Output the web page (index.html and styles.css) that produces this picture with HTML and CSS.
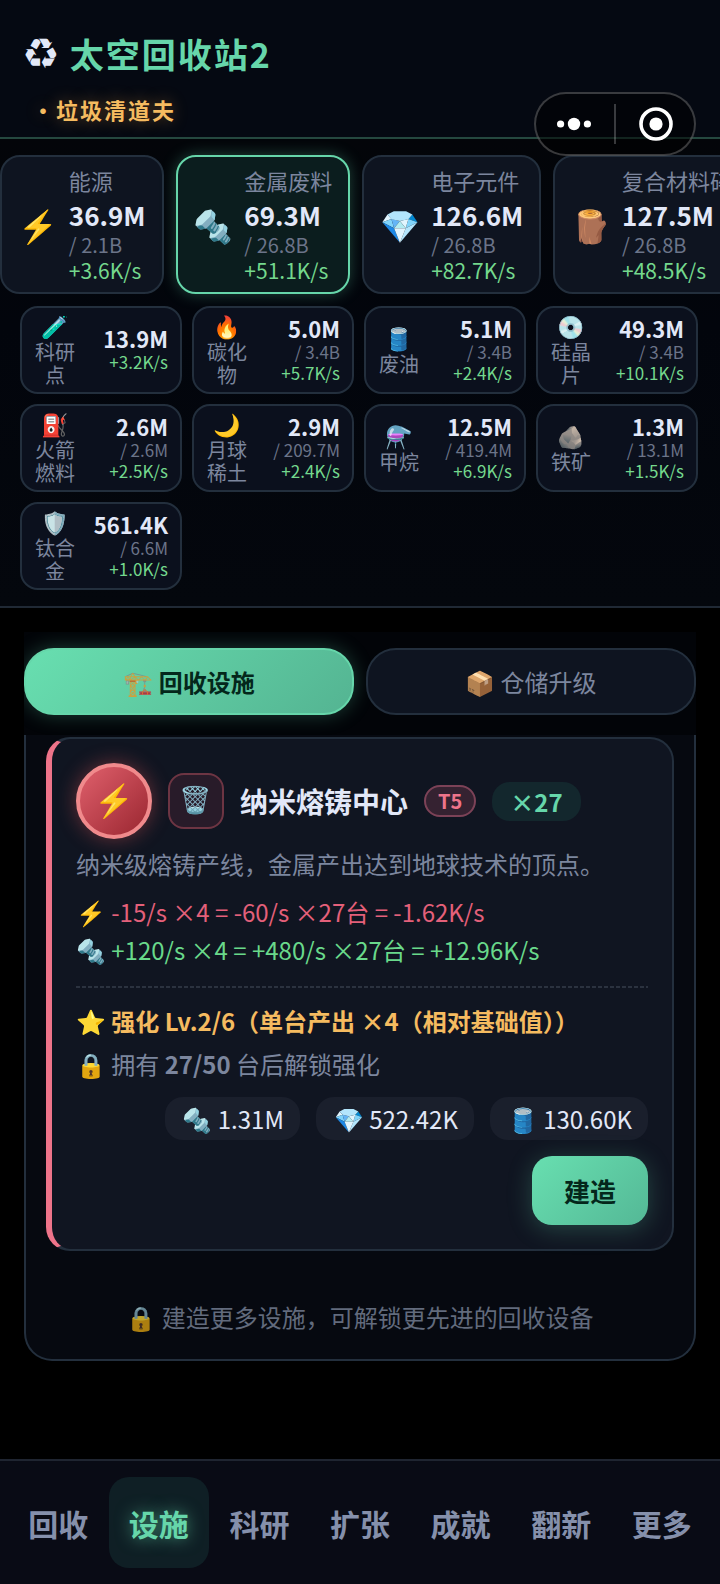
FILE: index.html
```html
<!DOCTYPE html>
<html lang="zh-CN">
<head>
<meta charset="utf-8">
<meta name="viewport" content="width=device-width, initial-scale=1">
<title>太空回收站2</title>
<link rel="stylesheet" href="styles.css">
</head>
<body>
<header class="topbar">
  <h1 class="brand"><span class="brand-icon">♻&#xFE0E;</span><span class="brand-name">太空回收站2</span></h1>
  <p class="rank">・垃圾清道夫</p>
  <div class="capsule">
    <button class="capsule-btn" type="button" aria-label="更多选项">
      <svg width="36" height="14" viewBox="0 0 36 14" fill="#fff"><circle cx="3.600" cy="7" r="3.600"/><circle cx="17" cy="7" r="6.200"/><circle cx="30.400" cy="7" r="3.600"/></svg>
    </button>
    <span class="capsule-line"></span>
    <button class="capsule-btn" type="button" aria-label="关闭">
      <svg width="36" height="36" viewBox="0 0 36 36"><circle cx="19" cy="18" r="15" fill="none" stroke="#fff" stroke-width="3.600"/><circle cx="19" cy="18" r="6.600" fill="#fff"/></svg>
    </button>
  </div>
</header>

<section class="resources">
  <div class="strip">
    <article class="res"><span class="res-icon">⚡</span><div><div class="res-name">能源</div><div class="res-value">36.9M</div><div class="res-cap">/ 2.1B</div><div class="res-rate">+3.6K/s</div></div></article>
    <article class="res res-active"><span class="res-icon">🔩</span><div><div class="res-name">金属废料</div><div class="res-value">69.3M</div><div class="res-cap">/ 26.8B</div><div class="res-rate">+51.1K/s</div></div></article>
    <article class="res"><span class="res-icon">💎</span><div><div class="res-name">电子元件</div><div class="res-value">126.6M</div><div class="res-cap">/ 26.8B</div><div class="res-rate">+82.7K/s</div></div></article>
    <article class="res"><span class="res-icon">🪵</span><div><div class="res-name">复合材料碎片</div><div class="res-value">127.5M</div><div class="res-cap">/ 26.8B</div><div class="res-rate">+48.5K/s</div></div></article>
  </div>
  <div class="grid">
    <article class="mini"><div class="mini-id"><span class="mini-icon">🧪</span><span class="mini-name">科研点</span></div><div class="mini-data"><div class="mini-value">13.9M</div><div class="mini-rate">+3.2K/s</div></div></article>
    <article class="mini"><div class="mini-id"><span class="mini-icon">🔥</span><span class="mini-name">碳化物</span></div><div class="mini-data"><div class="mini-value">5.0M</div><div class="mini-cap">/ 3.4B</div><div class="mini-rate">+5.7K/s</div></div></article>
    <article class="mini"><div class="mini-id"><span class="mini-icon">🛢️</span><span class="mini-name">废油</span></div><div class="mini-data"><div class="mini-value">5.1M</div><div class="mini-cap">/ 3.4B</div><div class="mini-rate">+2.4K/s</div></div></article>
    <article class="mini"><div class="mini-id"><span class="mini-icon">💿</span><span class="mini-name">硅晶片</span></div><div class="mini-data"><div class="mini-value">49.3M</div><div class="mini-cap">/ 3.4B</div><div class="mini-rate">+10.1K/s</div></div></article>
    <article class="mini"><div class="mini-id"><span class="mini-icon">⛽</span><span class="mini-name">火箭燃料</span></div><div class="mini-data"><div class="mini-value">2.6M</div><div class="mini-cap">/ 2.6M</div><div class="mini-rate">+2.5K/s</div></div></article>
    <article class="mini"><div class="mini-id"><span class="mini-icon">🌙</span><span class="mini-name">月球稀土</span></div><div class="mini-data"><div class="mini-value">2.9M</div><div class="mini-cap">/ 209.7M</div><div class="mini-rate">+2.4K/s</div></div></article>
    <article class="mini"><div class="mini-id"><span class="mini-icon">⚗️</span><span class="mini-name">甲烷</span></div><div class="mini-data"><div class="mini-value">12.5M</div><div class="mini-cap">/ 419.4M</div><div class="mini-rate">+6.9K/s</div></div></article>
    <article class="mini"><div class="mini-id"><span class="mini-icon">🪨</span><span class="mini-name">铁矿</span></div><div class="mini-data"><div class="mini-value">1.3M</div><div class="mini-cap">/ 13.1M</div><div class="mini-rate">+1.5K/s</div></div></article>
    <article class="mini"><div class="mini-id"><span class="mini-icon">🛡️</span><span class="mini-name">钛合金</span></div><div class="mini-data"><div class="mini-value">561.4K</div><div class="mini-cap">/ 6.6M</div><div class="mini-rate">+1.0K/s</div></div></article>
  </div>
</section>

<main class="content">
  <div class="tabs">
    <button class="tab tab-active" type="button"><span class="tab-icon">🏗️</span> 回收设施</button>
    <button class="tab" type="button">📦 仓储升级</button>
  </div>
  <section class="panel">
    <article class="facility">
      <div class="facility-head">
        <span class="orb">⚡</span>
        <button class="trash" type="button" aria-label="拆除">🗑️</button>
        <h2 class="facility-name">纳米熔铸中心</h2>
        <span class="tier">T5</span>
        <span class="count">×27</span>
      </div>
      <p class="desc">纳米级熔铸产线，金属产出达到地球技术的顶点。</p>
      <p class="flow flow-out">⚡ -15/s ×4 = -60/s ×27台 = -1.62K/s</p>
      <p class="flow flow-in">🔩 +120/s ×4 = +480/s ×27台 = +12.96K/s</p>
      <div class="boost">
        <p class="boost-level">⭐ 强化 Lv.2/6（单台产出 ×4（相对基础值））</p>
        <p class="boost-lock">🔒 拥有 <b>27/50</b> 台后解锁强化</p>
      </div>
      <div class="costs">
        <span class="cost">🔩 1.31M</span>
        <span class="cost">💎 522.42K</span>
        <span class="cost">🛢️ 130.60K</span>
      </div>
      <button class="build" type="button">建造</button>
    </article>
    <p class="hint"><span class="hint-icon">🔒</span> 建造更多设施，可解锁更先进的回收设备</p>
  </section>
</main>

<nav class="nav">
  <button class="nav-item" type="button">回收</button>
  <button class="nav-item nav-active" type="button">设施</button>
  <button class="nav-item" type="button">科研</button>
  <button class="nav-item" type="button">扩张</button>
  <button class="nav-item" type="button">成就</button>
  <button class="nav-item" type="button">翻新</button>
  <button class="nav-item" type="button">更多</button>
</nav>
</body>
</html>
```
FILE: styles.css
```css
:root {
  --green: #66d6aa;
  --rate: #74d88d;
  --muted: #7c869e;
  --text: #e2e8f8;
  --line: #232f3d;
  --card: #0e1420;
  --gold: #f5bb60;
  --pink: #ee748a;
}
* { box-sizing: border-box; }
body {
  margin: 0;
  min-height: 100vh;
  display: flex;
  flex-direction: column;
  overflow-x: hidden;
  background: #000;
  color: var(--text);
  font-family: "Noto Sans CJK SC", "Noto Color Emoji", sans-serif;
}
h1, h2, p { margin: 0; }
button { font-family: inherit; border: 0; padding: 0; background: none; color: inherit; }

.topbar {
  position: relative;
  padding: 29px 24px 12px 22px;
  border-bottom: 2px solid #25483f;
  background: #050912;
}
.brand {
  display: flex;
  align-items: center;
  gap: 10px;
  font-size: 34px;
  line-height: 50px;
  letter-spacing: 2px;
}
.brand-icon { font-family: "DejaVu Sans", sans-serif; font-size: 42px; font-weight: 400; letter-spacing: 0; }
.brand-name { color: var(--green); }
.rank {
  padding: 14px 10px 0;
  font-size: 22px;
  font-weight: 700;
  line-height: 32px;
  letter-spacing: 2px;
  color: var(--gold);
  text-shadow: 0 0 16px rgba(245, 160, 60, .4);
}
.capsule {
  position: absolute;
  z-index: 2;
  right: 24px;
  bottom: -19px;
  width: 162px;
  height: 64px;
  display: flex;
  align-items: center;
  border: 2px solid rgba(255, 255, 255, .22);
  border-radius: 32px;
  background: rgba(0, 0, 0, .5);
}
.capsule-btn { flex: 1; display: flex; align-items: center; justify-content: center; }
.capsule-line { width: 2px; height: 40px; background: rgba(255, 255, 255, .22); }

.resources {
  padding: 16px 0;
  border-bottom: 2px solid #202935;
  background: linear-gradient(#030509, #02050c 40%, #04070d);
  overflow: hidden;
}
.strip { display: flex; gap: 12px; }
.res {
  flex: none;
  display: flex;
  align-items: center;
  gap: 11px;
  min-height: 139px;
  padding: 6px 16px 8px;
  border: 2px solid var(--line);
  border-radius: 20px;
  background: var(--card);
  white-space: nowrap;
}
.res-active {
  border-color: var(--green);
  background: #0b1d1e;
  box-shadow: 0 0 16px rgba(102, 220, 174, .3);
}
.res-icon { font-size: 32px; line-height: 40px; }
.res-name { font-size: 22px; line-height: 32px; color: var(--muted); }
.res-value { font-size: 26px; font-weight: 700; line-height: 38px; }
.res-cap { font-size: 20px; line-height: 22px; color: #6b7489; }
.res-rate { font-size: 21px; line-height: 28px; color: var(--rate); }

.grid {
  display: grid;
  grid-template-columns: repeat(4, minmax(0, 1fr));
  gap: 10px;
  padding: 12px 22px 0 20px;
}
.mini {
  display: flex;
  align-items: center;
  justify-content: space-between;
  height: 88px;
  padding: 0 12px;
  border: 2px solid var(--line);
  border-radius: 18px;
  background: #0b101d;
}
.mini-id { display: flex; flex-direction: column; align-items: center; width: 42px; text-align: center; }
.mini-icon { margin-bottom: 4px; font-size: 22px; line-height: 22px; }
.mini-name { font-size: 20px; line-height: 23px; color: var(--muted); }
.mini-data { padding-bottom: 2px; text-align: right; white-space: nowrap; }
.mini-value { font-size: 22px; font-weight: 700; line-height: 26px; }
.mini-cap { font-size: 17px; line-height: 21px; color: #6b7489; }
.mini-rate { font-size: 17px; line-height: 22px; color: var(--rate); }

.content { flex: 1; padding: 24px 24px 0; }
.tabs { display: flex; gap: 12px; padding: 16px 0 20px; background: #020408; overflow: hidden; }
.tab {
  flex: 1;
  height: 67px;
  border: 2px solid var(--line);
  border-radius: 30px;
  background: var(--card);
  color: var(--muted);
  font-size: 24px;
}
.tab-active {
  border-color: #66d6aa;
  background: linear-gradient(135deg, #68dfb0, #54b492);
  box-shadow: 0 0 20px rgba(102, 220, 174, .28);
  color: #04271b;
  font-weight: 700;
}
.tab-icon { opacity: .75; }
.panel {
  padding: 2px 20px 24px;
  border: 2px solid var(--line);
  border-top: 0;
  border-radius: 0 0 28px 28px;
  background: #060910;
}
.facility {
  display: flex;
  flex-direction: column;
  padding: 24px;
  border: 2px solid var(--line);
  border-left: 6px solid var(--pink);
  border-radius: 24px;
  background: #101521;
}
.facility-head { display: flex; align-items: center; gap: 16px; }
.orb {
  display: grid;
  place-items: center;
  width: 76px;
  height: 76px;
  padding-bottom: 6px;
  border: 4px solid #f08a8c;
  border-radius: 50%;
  background: linear-gradient(135deg, #e0606c, #9a2630);
  box-shadow: 0 0 20px rgba(240, 90, 90, .4);
  font-size: 32px;
  line-height: 36px;
}
.trash {
  width: 56px;
  height: 56px;
  padding-bottom: 6px;
  border: 2px solid #6d3543;
  border-radius: 16px;
  background: #281b29;
  font-size: 26px;
  line-height: 36px;
}
.facility-name { font-size: 28px; font-weight: 700; line-height: 40px; }
.tier {
  padding: 0 12px;
  border: 2px solid #7c4257;
  border-radius: 16px;
  background: #352231;
  color: var(--pink);
  font-size: 20px;
  font-weight: 700;
  line-height: 28px;
}
.count {
  padding: 0 18px;
  border-radius: 18px;
  background: #13272d;
  color: var(--green);
  font-size: 24px;
  font-weight: 700;
  line-height: 39px;
}
.desc { margin-top: 6px; font-size: 24px; line-height: 38px; color: var(--muted); }
.flow { font-size: 24px; line-height: 38px; }
.flow-out { margin-top: 10px; color: #e4607a; }
.flow-in { color: #69d98b; }
.boost {
  margin-top: 17px;
  padding-top: 16px;
  background: repeating-linear-gradient(90deg, #2b323f 0 4px, transparent 4px 6px) top / 100% 2px no-repeat;
}
.boost-level { font-size: 24px; font-weight: 700; line-height: 38px; color: var(--gold); }
.boost-lock { margin-top: 5px; font-size: 24px; line-height: 38px; color: var(--muted); }
.costs { display: flex; justify-content: flex-end; gap: 16px; margin-top: 14px; }
.cost {
  padding: 0 16px 0 18px;
  border-radius: 18px;
  background: #1a1f2c;
  font-size: 24px;
  line-height: 43px;
}
.build {
  align-self: flex-end;
  margin-top: 16px;
  padding: 0 32px;
  border-radius: 20px;
  background: linear-gradient(135deg, #68dfb0, #54b896);
  box-shadow: 0 4px 24px rgba(102, 220, 174, .25);
  color: #04271b;
  font-size: 26px;
  font-weight: 700;
  line-height: 69px;
}
.hint { margin-top: 48px; font-size: 24px; line-height: 36px; color: #626b7d; text-align: center; }
.hint-icon { opacity: .75; }

.nav {
  display: flex;
  padding: 16px 8px;
  border-top: 2px solid #1f2531;
  background: #090b15;
}
.nav-item {
  flex: 1;
  height: 91px;
  border-radius: 20px;
  color: #8590ab;
  font-size: 30px;
  font-weight: 700;
}
.nav-active {
  background: #0f1f25;
  color: var(--green);
  text-shadow: 0 0 16px rgba(102, 220, 174, .6);
}
```
